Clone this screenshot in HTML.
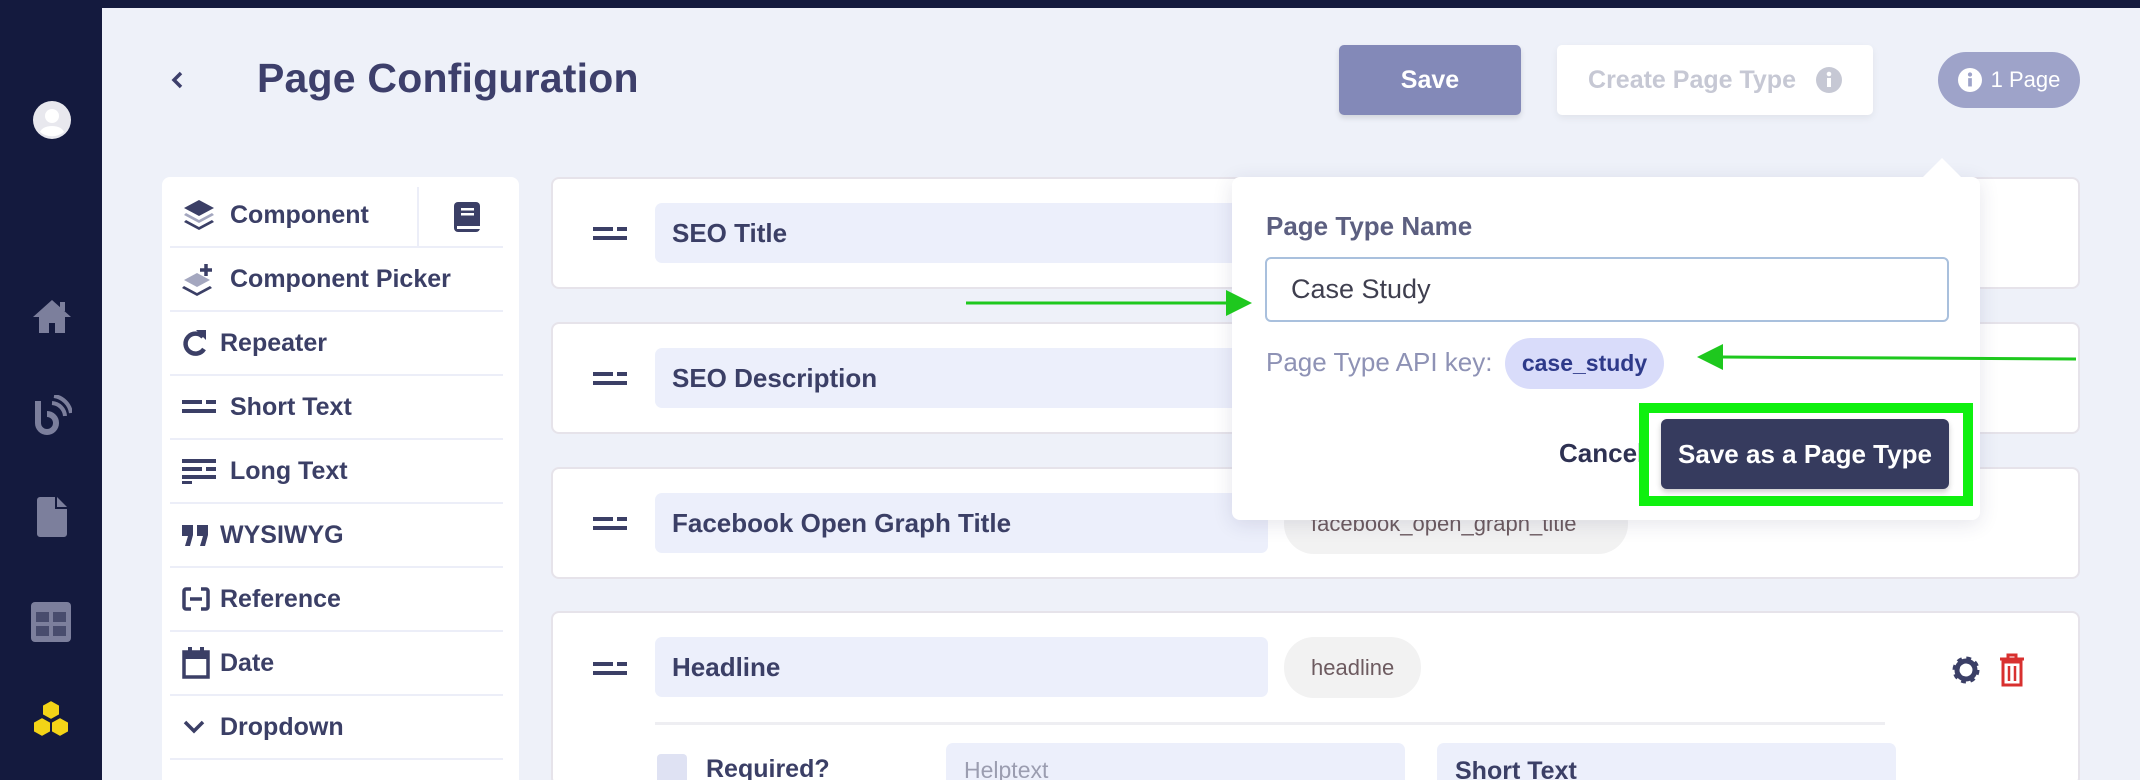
<!DOCTYPE html>
<html><head><meta charset="utf-8"><style>
*{margin:0;padding:0;box-sizing:border-box}
html,body{width:2140px;height:780px;overflow:hidden}
body{background:#eef1f9;font-family:"Liberation Sans",sans-serif;position:relative;color:#3b3f66}
.abs{position:absolute}
.top{left:0;top:0;width:2140px;height:8px;background:#141a3e}
.side{left:0;top:0;width:102px;height:780px;background:#141a3e}
.title{left:257px;top:55px;font-size:41px;font-weight:700;color:#3d3f6b;letter-spacing:0.2px}
.btn{border-radius:5px;display:flex;align-items:center;justify-content:center;font-weight:700;font-size:25px}
.panel{left:162px;top:177px;width:357px;height:603px;background:#fff;border-radius:8px 8px 0 0;overflow:hidden}
.row{position:absolute;left:8px;width:333px;height:64px;border-bottom:2px solid #eceef8;display:flex;align-items:center;font-size:25px;font-weight:700;color:#3b3f66;white-space:nowrap}
.row svg{margin:0 14px 0 12px;flex:none}
.card{left:551px;width:1529px;background:#fff;border:2px solid #e6e3ea;border-radius:8px;overflow:hidden}
.inp{position:absolute;left:102px;width:613px;height:60px;background:#eceffb;border-radius:7px;font-size:26px;font-weight:700;color:#3b3f66;padding-left:17px;display:flex;align-items:center}
.pill{position:absolute;left:731px;height:61px;background:#f2f2f2;border-radius:30px;font-size:22px;color:#6d5b60;display:flex;align-items:center;padding:0 27px}
.drag{position:absolute;left:40px}
</style></head><body>
<div class="abs side"></div>
<div class="abs top"></div>
<svg class="abs" style="left:33px;top:101px" width="38" height="38" viewBox="0 0 38 38"><circle cx="19" cy="19" r="19" fill="#e8e8ee"/><circle cx="19" cy="15" r="7" fill="#fff"/><path d="M7 31c3-8 21-8 24 0a19 19 0 0 1-24 0z" fill="#fff"/></svg>
<svg class="abs" style="left:32px;top:298px" width="40" height="36" viewBox="0 0 40 36"><path d="M20 2L1 19h6v16h10V25h6v10h10V19h6z" fill="#7c7f9c"/><rect x="28" y="4" width="5" height="9" fill="#7c7f9c"/></svg>
<svg class="abs" style="left:32px;top:395px" width="40" height="40" viewBox="0 0 40 40"><path d="M6 6v22a9 9 0 1 0 9-9" fill="none" stroke="#7c7f9c" stroke-width="6"/><path d="M20 8a14 14 0 0 1 13 13M22 1a20 20 0 0 1 17 17" fill="none" stroke="#7c7f9c" stroke-width="4"/></svg>
<svg class="abs" style="left:37px;top:497px" width="30" height="40" viewBox="0 0 30 40"><path d="M0 3a3 3 0 0 1 3-3h15v12h12v25a3 3 0 0 1-3 3H3a3 3 0 0 1-3-3z" fill="#7c7f9c"/><path d="M20 0l10 10H20z" fill="#7c7f9c"/></svg>
<svg class="abs" style="left:31px;top:602px" width="40" height="40" viewBox="0 0 40 40"><rect width="40" height="40" rx="4" fill="#7c7f9c"/><rect x="5" y="10" width="13" height="10" fill="#141a3e" opacity=".5"/><rect x="22" y="10" width="13" height="10" fill="#141a3e" opacity=".5"/><rect x="5" y="24" width="13" height="10" fill="#141a3e" opacity=".5"/><rect x="22" y="24" width="13" height="10" fill="#141a3e" opacity=".5"/></svg>
<svg class="abs" style="left:30px;top:698px" width="42" height="42" viewBox="0 0 42 42" fill="#f3d417" stroke="#141a3e" stroke-width="2" stroke-linejoin="round"><path d="M21 2l9 5v10l-9 5-9-5V7z"/><path d="M12 19l9 5v10l-9 5-9-5V24z"/><path d="M30 19l9 5v10l-9 5-9-5V24z"/></svg>

<svg class="abs" style="left:170px;top:70px" width="14" height="20" viewBox="0 0 14 20"><path d="M11 3L4 10l7 7" fill="none" stroke="#3d3f6b" stroke-width="3.5"/></svg>
<div class="abs title">Page Configuration</div>
<div class="abs btn" style="left:1339px;top:45px;width:182px;height:70px;background:#8389b8;color:#fff;box-shadow:0 3px 6px rgba(0,0,0,.12)">Save</div>
<div class="abs btn" style="left:1557px;top:45px;width:316px;height:70px;background:#fff;color:#c6c8d4;box-shadow:0 3px 8px rgba(0,0,0,.06)">Create Page Type<svg style="margin-left:20px" width="26" height="26" viewBox="0 0 26 26"><circle cx="13" cy="13" r="13" fill="#c6c8d4"/><rect x="11" y="11" width="4" height="9" fill="#fff"/><circle cx="13" cy="7" r="2.3" fill="#fff"/></svg></div>
<div class="abs btn" style="left:1938px;top:52px;width:142px;height:56px;background:#9ea3c9;color:#fff;border-radius:28px;font-size:22px;font-weight:400"><svg style="margin-right:9px" width="24" height="24" viewBox="0 0 26 26"><circle cx="13" cy="13" r="13" fill="#fff"/><rect x="11" y="11" width="4" height="9" fill="#9ea3c9"/><circle cx="13" cy="7" r="2.3" fill="#9ea3c9"/></svg>1 Page</div>

<div class="abs panel">
 <div class="row" style="top:7px"><svg width="34" height="34" viewBox="0 0 34 34"><path d="M17 2l15 8-15 8-15-8z" fill="#3b3f66"/><path d="M4 15l13 7 13-7 2 2-15 8-15-8z" fill="#a4a7bf"/><path d="M4 22l13 7 13-7 2 2-15 8-15-8z" fill="#3b3f66"/></svg>Component</div>
 <div class="abs" style="left:255px;top:10px;width:2px;height:60px;background:#eceef8"></div>
 <svg class="abs" style="left:292px;top:25px" width="26" height="30" viewBox="0 0 26 30"><rect width="26" height="30" rx="4" fill="#3b3f66"/><rect x="7" y="6" width="13" height="2.5" fill="#fff"/><rect x="7" y="11" width="13" height="2.5" fill="#fff"/><rect x="3" y="24" width="23" height="3" fill="#fff"/></svg>
 <div class="row" style="top:71px"><svg width="34" height="34" viewBox="0 0 34 34"><path d="M2 18l13-7 13 7-13 7z" fill="#a4a7bf"/><path d="M2 24l13 7 13-7 2 2-15 8-15-8z" fill="#3b3f66"/><path d="M24 2v12M18 8h12" stroke="#3b3f66" stroke-width="3.5"/></svg>Component Picker</div>
 <div class="row" style="top:135px"><svg width="26" height="30" viewBox="0 0 26 30" style="margin-right:12px"><path d="M21 9A10 10 0 1 0 22 21" fill="none" stroke="#3b3f66" stroke-width="4.5"/><path d="M14 2h10v10z" fill="#3b3f66"/></svg>Repeater</div>
 <div class="row" style="top:199px"><svg width="34" height="20" viewBox="0 0 34 20"><rect y="3" width="20" height="4" fill="#3b3f66"/><rect x="24" y="3" width="10" height="4" fill="#3b3f66"/><rect y="12" width="34" height="4" fill="#3b3f66"/></svg>Short Text</div>
 <div class="row" style="top:263px"><svg width="34" height="26" viewBox="0 0 34 26"><rect y="1" width="34" height="4" fill="#3b3f66"/><rect y="9" width="20" height="4" fill="#3b3f66"/><rect x="24" y="9" width="10" height="4" fill="#3b3f66"/><rect y="17" width="34" height="4" fill="#3b3f66"/><rect y="23" width="10" height="3" fill="#3b3f66"/></svg>Long Text</div>
 <div class="row" style="top:327px"><svg width="28" height="24" viewBox="0 0 28 24" style="margin-right:10px"><path d="M0 2h11v10l-3 11H3l3-10H0zM15 2h11v10l-3 11h-5l3-10h-6z" fill="#3b3f66"/></svg>WYSIWYG</div>
 <div class="row" style="top:391px"><svg width="28" height="26" viewBox="0 0 28 26" style="margin-right:10px"><path d="M9 3H4a2 2 0 0 0-2 2v16a2 2 0 0 0 2 2h5M19 3h5a2 2 0 0 1 2 2v16a2 2 0 0 1-2 2h-5M8 13h12" fill="none" stroke="#3b3f66" stroke-width="3.5"/></svg>Reference</div>
 <div class="row" style="top:455px"><svg width="28" height="32" viewBox="0 0 28 32" style="margin-right:10px"><rect x="2" y="5" width="24" height="25" fill="none" stroke="#3b3f66" stroke-width="3.5"/><rect x="2" y="5" width="24" height="7" fill="#3b3f66"/><rect x="6" y="0" width="4" height="7" fill="#3b3f66"/><rect x="18" y="0" width="4" height="7" fill="#3b3f66"/></svg>Date</div>
 <div class="row" style="top:519px"><svg width="24" height="18" viewBox="0 0 24 18" style="margin-right:14px"><path d="M3 4l9 9 9-9" fill="none" stroke="#3b3f66" stroke-width="3.5"/></svg>Dropdown</div>
</div>

<svg width="0" height="0" style="position:absolute"><defs><g id="dr"><rect y="0" width="20" height="4" fill="#3b3f66"/><rect x="24" y="0" width="10" height="4" fill="#3b3f66"/><rect y="9" width="34" height="4" fill="#3b3f66"/></g></defs></svg>
<div class="abs card" style="top:177px;height:112px"><svg class="drag" style="top:48px" width="34" height="13"><use href="#dr"/></svg><div class="inp" style="top:24px">SEO Title</div></div>
<div class="abs card" style="top:322px;height:112px"><svg class="drag" style="top:48px" width="34" height="13"><use href="#dr"/></svg><div class="inp" style="top:24px">SEO Description</div></div>
<div class="abs card" style="top:467px;height:112px"><svg class="drag" style="top:48px" width="34" height="13"><use href="#dr"/></svg><div class="inp" style="top:24px">Facebook Open Graph Title</div><div class="pill" style="top:24px;width:344px">facebook_open_graph_title</div></div>
<div class="abs card" style="top:611px;height:175px"><svg class="drag" style="top:49px" width="34" height="13"><use href="#dr"/></svg><div class="inp" style="top:24px">Headline</div><div class="pill" style="top:24px">headline</div>
 <svg class="abs" style="left:1398px;top:42px" width="30" height="30" viewBox="0 0 30 30"><circle cx="15" cy="15" r="10" fill="none" stroke="#3b3f66" stroke-width="7" stroke-dasharray="4 3.85"/><circle cx="15" cy="15" r="9" fill="none" stroke="#3b3f66" stroke-width="5"/></svg>
 <svg class="abs" style="left:1446px;top:40px" width="26" height="34" viewBox="0 0 26 34"><path d="M1 6h24M9 6V2h8v4" fill="none" stroke="#d8302f" stroke-width="3"/><rect x="4" y="9" width="18" height="23" fill="none" stroke="#d8302f" stroke-width="3"/><path d="M10 13v15M16 13v15" stroke="#d8302f" stroke-width="2.5"/></svg>
 <div class="abs" style="left:102px;top:109px;width:1230px;height:3px;background:#eeeef2"></div>
 <div class="abs" style="left:104px;top:141px;width:30px;height:30px;background:#dfe2f3;border-radius:4px"></div>
 <div class="abs" style="left:153px;top:142px;font-size:25px;font-weight:700">Required?</div>
 <div class="abs" style="left:393px;top:130px;width:459px;height:60px;background:#eceffb;border-radius:7px;font-size:23px;color:#9b9db0;padding:14px 18px">Helptext</div>
 <div class="abs" style="left:884px;top:130px;width:459px;height:60px;background:#eceffb;border-radius:7px;font-size:25px;font-weight:700;padding:14px 18px">Short Text</div>
</div>

<div class="abs" style="left:1232px;top:177px;width:748px;height:343px;background:#fff;border-radius:8px;box-shadow:0 4px 20px rgba(40,45,90,.12)"></div>
<div class="abs" style="left:1922px;top:158px;width:0;height:0;border-left:20px solid transparent;border-right:20px solid transparent;border-bottom:20px solid #fff"></div>
<div class="abs" style="left:1266px;top:211px;font-size:26px;font-weight:700;color:#5c5f80">Page Type Name</div>
<div class="abs" style="left:1265px;top:257px;width:684px;height:65px;border:2px solid #a9c0dd;border-radius:6px;font-size:27px;color:#3f3f4f;padding:15px 0 0 24px">Case Study</div>
<div class="abs" style="left:1266px;top:347px;font-size:26px;color:#8e92b5">Page Type API key:</div>
<div class="abs" style="left:1505px;top:338px;width:159px;height:51px;background:#d9dcfa;border-radius:26px;font-size:23px;font-weight:700;color:#2e3a8a;display:flex;align-items:center;justify-content:center">case_study</div>
<div class="abs" style="left:1559px;top:438px;font-size:26px;font-weight:700;color:#2e3152;width:84px;overflow:hidden;white-space:nowrap">Cancel</div>
<div class="abs" style="left:1639px;top:403px;width:334px;height:103px;border:10px solid #0ff00f"></div>
<div class="abs btn" style="left:1661px;top:419px;width:288px;height:70px;background:#363b5e;color:#fff;border-radius:6px;font-size:26px;box-shadow:0 3px 6px rgba(0,0,0,.2)">Save as a Page Type</div>

<svg class="abs" style="left:0;top:0" width="2140" height="780"><path d="M966 303H1228" stroke="#1ec81e" stroke-width="3"/><path d="M1252 303l-26-13v26z" fill="#1ec81e"/><path d="M2076 359L1722 357" stroke="#1ec81e" stroke-width="3"/><path d="M1697 357l26-13v26z" fill="#1ec81e"/></svg>
</body></html>
